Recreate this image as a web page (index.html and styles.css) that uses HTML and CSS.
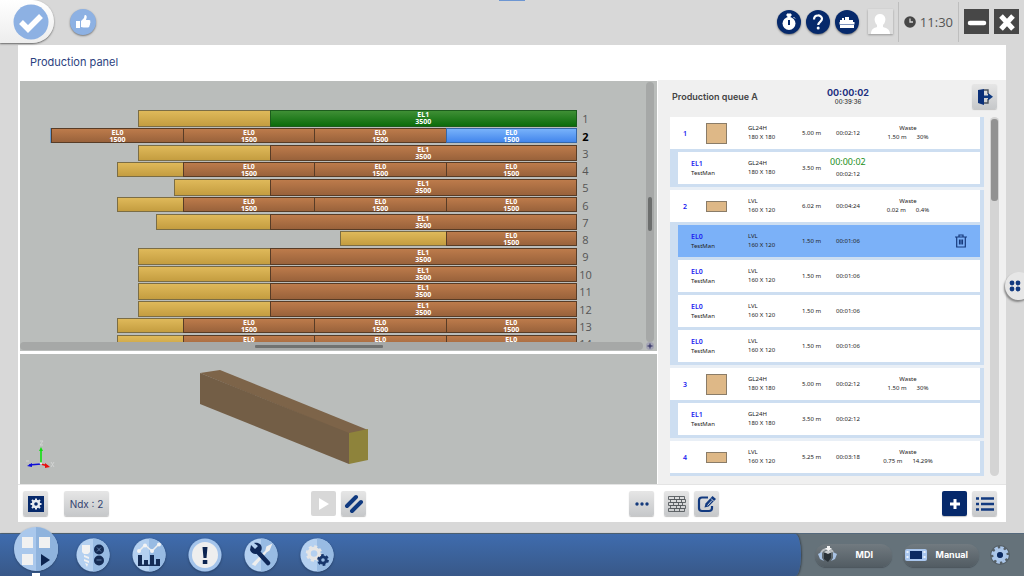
FILE: index.html
```html
<!DOCTYPE html>
<html lang="en">
<head>
<meta charset="utf-8">
<title>Production panel</title>
<link rel="stylesheet" href="styles.css">
</head>
<body>
<header class="topbar">
  <span class="top-mark"></span>
  <button class="tab-check" aria-label="Confirm"><svg viewBox="0 0 36 36" width="36" height="36"><circle cx="18" cy="18" r="17.500" fill="#8db1e3"/><path d="M8 18l7 7L28 12" fill="none" stroke="#fff" stroke-width="5.500"/></svg></button>
  <button class="round like" aria-label="Like"><svg viewBox="0 0 26 26" width="26" height="26"><path d="M6 12h4v7H6zM11 12l3-3 .5-2.500c1-1 2.500 0 2.200 2L16 11h3.200c1 0 1.500 1 1 1.700.4.700.2 1.400-.2 1.800.2.800 0 1.400-.4 1.800 0 1-.5 2-1.600 2.200h-4.500L11 18z" fill="#fff"/></svg></button>
  <div class="top-right">
    <button class="round navy" aria-label="Timer"><svg viewBox="0 0 24 24" width="24" height="24"><circle cx="12" cy="13.500" r="6.500" fill="#fff"/><path d="M10 4h4v2h-1v2h-2V6h-1zM16.500 7l1.500 1.500" fill="#fff" stroke="#fff"/><path d="M12 10v5" stroke="#06296b" stroke-width="2"/></svg></button>
    <button class="round navy" aria-label="Help"><svg viewBox="0 0 24 24" width="24" height="24"><path d="M8 9.500c0-5.500 8-5 8-.7 0 3-3.800 3-3.800 6.200" fill="none" stroke="#fff" stroke-width="2.200"/><circle cx="12.200" cy="18" r="1.500" fill="#fff"/></svg></button>
    <button class="round navy" aria-label="Machine"><svg viewBox="0 0 24 24" width="24" height="24"><path d="M5 10h2V8h2v2h1V7h4v3h4v2h1.500v2H4.500v-2H5zM5 15h14v3H5z" fill="#fff"/><path d="M4.500 14.500h15" stroke="#9fb2d4" stroke-width=".8"/></svg></button>
    <button class="user" aria-label="User"><svg viewBox="0 0 24 24" width="24" height="24"><path d="M3 24c0-5 3-6 6-7v-2c-4-4-3-11 3-11s7 7 3 11v2c3 1 7 2 7 7z" fill="#fff"/></svg></button>
    <div class="clock"><svg viewBox="0 0 12 12" width="12" height="12"><circle cx="6" cy="6" r="5.800" fill="#474747"/><path d="M6 2.500V6h3" fill="none" stroke="#d8d8d8" stroke-width="1.300"/></svg><span>11:30</span></div>
    <button class="win" aria-label="Minimize"><svg viewBox="0 0 24 24" width="24" height="24"><path d="M5 13h14" stroke="#fff" stroke-width="4.500" stroke-linecap="round"/></svg></button>
    <button class="win" aria-label="Close"><svg viewBox="0 0 24 24" width="24" height="24"><path d="M6 6l12 13M18 6L6 19" stroke="#fff" stroke-width="5"/></svg></button>
  </div>
</header>

<main class="panel">
  <h1 class="title">Production panel</h1>
  <div class="columns">
    <section class="left">
      <div class="chart">
        <div class="chart-view">
          <div class="rows">
            <div class="row tall"><div class="bars"><i class="waste" style="width:23.600%"></i><b class="seg l3500 green">EL1<br>3500</b></div><span>1</span></div>
            <div class="row current"><div class="bars"><i class="cut"></i><b class="seg l1500">EL0<br>1500</b><b class="seg l1500">EL0<br>1500</b><b class="seg l1500">EL0<br>1500</b><b class="seg l1500 blue">EL0<br>1500</b></div><span>2</span></div>
            <div class="row tall"><div class="bars"><i class="waste" style="width:23.600%"></i><b class="seg l3500">EL1<br>3500</b></div><span>3</span></div>
            <div class="row"><div class="bars"><i class="waste" style="width:11.800%"></i><b class="seg l1500">EL0<br>1500</b><b class="seg l1500">EL0<br>1500</b><b class="seg l1500">EL0<br>1500</b></div><span>4</span></div>
            <div class="row tall"><div class="bars"><i class="waste" style="width:17.200%"></i><b class="seg l3500">EL1<br>3500</b></div><span>5</span></div>
            <div class="row"><div class="bars"><i class="waste" style="width:11.800%"></i><b class="seg l1500">EL0<br>1500</b><b class="seg l1500">EL0<br>1500</b><b class="seg l1500">EL0<br>1500</b></div><span>6</span></div>
            <div class="row tall"><div class="bars"><i class="waste" style="width:20.400%"></i><b class="seg l3500">EL1<br>3500</b></div><span>7</span></div>
            <div class="row"><div class="bars"><i class="waste" style="width:18.900%"></i><b class="seg l1500">EL0<br>1500</b></div><span>8</span></div>
            <div class="row tall"><div class="bars"><i class="waste" style="width:23.600%"></i><b class="seg l3500">EL1<br>3500</b></div><span>9</span></div>
            <div class="row tall"><div class="bars"><i class="waste" style="width:23.600%"></i><b class="seg l3500">EL1<br>3500</b></div><span>10</span></div>
            <div class="row tall"><div class="bars"><i class="waste" style="width:23.600%"></i><b class="seg l3500">EL1<br>3500</b></div><span>11</span></div>
            <div class="row tall"><div class="bars"><i class="waste" style="width:23.600%"></i><b class="seg l3500">EL1<br>3500</b></div><span>12</span></div>
            <div class="row"><div class="bars"><i class="waste" style="width:11.800%"></i><b class="seg l1500">EL0<br>1500</b><b class="seg l1500">EL0<br>1500</b><b class="seg l1500">EL0<br>1500</b></div><span>13</span></div>
            <div class="row"><div class="bars"><i class="waste" style="width:11.800%"></i><b class="seg l1500">EL0<br>1500</b><b class="seg l1500">EL0<br>1500</b><b class="seg l1500">EL0<br>1500</b></div><span>14</span></div>
          </div>
        </div>
        <div class="vtrack"><i></i></div>
        <div class="htrack"><i></i></div>
        <button class="zoom-in" aria-label="Zoom in"><svg viewBox="0 0 8 8" width="8" height="8"><circle cx="4" cy="4" r="4" fill="#a4a4b4"/><path d="M4 1.500v5M1.500 4h5" stroke="#24245c"/></svg></button>
      </div>
      <div class="model">
        <svg class="beam" viewBox="0 0 170 96" width="170" height="96"><path d="M0 4L20 1 168 61 149 65z" fill="#7d6449"/><path d="M0 4L149 64V95L0 35z" fill="#735e46"/><path d="M149 64l19-4v31l-19 4z" fill="#8e833b"/></svg>
        <svg class="axes" viewBox="0 0 32 30" width="32" height="30"><g stroke-width="1.600"><path d="M15 23V10" stroke="#10e010"/><path d="M15 24l7 2" stroke="#e81010"/><path d="M15 24L3 25" stroke="#1010d8"/></g><path d="M13 11l2-4 2 4z" fill="#10e010"/><path d="M19 23l5 4-5 1z" fill="#e81010"/><path d="M6 23l-5 3 5 1z" fill="#1010d8"/><circle cx="15" cy="23.500" r="1.200" fill="#eee"/><g fill="none" stroke="#d2d4d3"><path d="M14 1h3l-3 4h3M0 21h3M25 22l3 5m0-5l-3 5"/></g></svg>
      </div>
      <div class="tools left-tools">
        <div class="group spaced">
          <button class="tool" aria-label="Settings"><svg viewBox="0 0 16 16" width="16" height="16"><path d="M0 0h16v16H0z" fill="#06296b"/><circle cx="8" cy="8" r="3" fill="none" stroke="#e8ecf2" stroke-width="2.400"/><path d="M8 2.500v2M8 11.500v2M2.500 8h2M11.500 8h2M4 4l1.500 1.500M10.500 10.500L12 12M12 4l-1.500 1.500M4 12l1.500-1.500" stroke="#e8ecf2" stroke-width="2"/></svg></button>
          <button class="tool ndx">Ndx : 2</button>
        </div>
        <div class="group">
          <button class="tool off" aria-label="Play" disabled><svg viewBox="0 0 12 14" width="12" height="14"><path d="M1 1l10 6-10 6z" fill="#fff"/></svg></button>
          <button class="tool" aria-label="Stripes"><svg viewBox="0 0 20 20" width="20" height="20"><path d="M3 12L12 3M8 17L17 8" stroke="#103a80" stroke-width="4" stroke-linecap="round"/></svg></button>
        </div>
        <div class="group end">
          <button class="tool" aria-label="More"><svg viewBox="0 0 14 4" width="14" height="4"><g fill="#143a7c"><circle cx="2" cy="2" r="1.700"/><circle cx="7" cy="2" r="1.700"/><circle cx="12" cy="2" r="1.700"/></g></svg></button>
        </div>
      </div>
    </section>

    <section class="right">
      <div class="queue">
        <div class="queue-head">
          <h2>Production queue A</h2>
          <div class="totals"><strong>00:00:02</strong><span>00:39:36</span></div>
          <button class="tool exit" aria-label="Exit"><svg viewBox="0 0 16 18" width="16" height="18"><path d="M1 2l6-1v16l-6-2z" fill="#0a2f78"/><path d="M7 2h4v4M7 15h4v-4" fill="none" stroke="#4a525c" stroke-width="1.400"/><path d="M7 7.500h4V5l5 3.700L11 12.500V10H7z" fill="#103a80"/></svg></button>
        </div>
        <div class="queue-body">
          <div class="list">
            <article class="job">
              <div class="item head"><b>1</b><i class="swatch"></i><p>GL24H<br>180 X 180</p><span>5.00 m</span><span>00:02:12</span><p class="loss">Waste<br>1.50 m<em>30%</em></p></div>
              <div class="item part"><p><b>EL1</b><br>TestMan</p><p>GL24H<br>180 X 180</p><span>3.50 m</span><span class="run"><strong>00:00:02</strong>00:02:12</span></div>
            </article>
            <article class="job">
              <div class="item head"><b>2</b><i class="swatch flat"></i><p>LVL<br>160 X 120</p><span>6.02 m</span><span>00:04:24</span><p class="loss">Waste<br>0.02 m<em>0.4%</em></p></div>
              <div class="item part selected"><p><b>EL0</b><br>TestMan</p><p>LVL<br>160 X 120</p><span>1.50 m</span><span>00:01:06</span><button class="trash" aria-label="Delete"><svg viewBox="0 0 12 14" width="12" height="14"><path d="M0 3h12M4 3V1h4v2M1.700 3.500V13h8.600V3.500M4.500 5.500v5M6 5.500v5M7.500 5.500v5" fill="none" stroke="#173a7c" stroke-width="1.200"/></svg></button></div>
              <div class="item part"><p><b>EL0</b><br>TestMan</p><p>LVL<br>160 X 120</p><span>1.50 m</span><span>00:01:06</span></div>
              <div class="item part"><p><b>EL0</b><br>TestMan</p><p>LVL<br>160 X 120</p><span>1.50 m</span><span>00:01:06</span></div>
              <div class="item part"><p><b>EL0</b><br>TestMan</p><p>LVL<br>160 X 120</p><span>1.50 m</span><span>00:01:06</span></div>
            </article>
            <article class="job">
              <div class="item head"><b>3</b><i class="swatch"></i><p>GL24H<br>180 X 180</p><span>5.00 m</span><span>00:02:12</span><p class="loss">Waste<br>1.50 m<em>30%</em></p></div>
              <div class="item part"><p><b>EL1</b><br>TestMan</p><p>GL24H<br>180 X 180</p><span>3.50 m</span><span>00:02:12</span></div>
            </article>
            <article class="job">
              <div class="item head"><b>4</b><i class="swatch flat"></i><p>LVL<br>160 X 120</p><span>5.25 m</span><span>00:03:18</span><p class="loss">Waste<br>0.75 m<em>14.29%</em></p></div>
              <div class="item part"></div>
            </article>
          </div>
          <div class="list-track"><i></i></div>
        </div>
      </div>
      <div class="tools right-tools">
        <div class="group">
          <button class="tool" aria-label="Bricks"><svg viewBox="0 0 18 18" width="18" height="18"><path d="M.5 1.500h16v3H.5zM2.500 4.500h15v3h-15zM.5 7.500h14v3H.5zM2.500 10.500h15v3h-15zM.5 13.500h16v3H.5zM6.500 1.500v3M11.500 1.500v3M8.500 4.500v3M13.500 4.500v3M5.500 7.500v3M10.500 7.500v3M8.500 10.500v3M12.500 10.500v3M6.500 13.500v3M11.500 13.500v3" fill="none" stroke="#555a5e" stroke-width=".9"/></svg></button>
          <button class="tool" aria-label="Edit"><svg viewBox="0 0 20 20" width="20" height="20"><path d="M11 3.500H5Q2 3.500 2 6.500V14q0 3 3 3h7q3 0 3-3v-2" fill="none" stroke="#123a80" stroke-width="2.200"/><path d="M7.500 13.500l1-4 7-7.500 3.500 3-7.500 7.500z" fill="#123a80"/><path d="M14 4.500l3 3M10.500 11.500l4.500-5" stroke="#d8dce2"/></svg></button>
        </div>
        <div class="group">
          <button class="tool add" aria-label="Add"><svg viewBox="0 0 12 12" width="12" height="12"><path d="M6 1v10M1 6h10" stroke="#fff" stroke-width="3"/></svg></button>
          <button class="tool" aria-label="List"><svg viewBox="0 0 18 16" width="18" height="16"><path d="M5 2.500h13M5 8h13M5 13.500h13M0 2.500h3M0 8h3M0 13.500h3" stroke="#123a80" stroke-width="2.600"/></svg></button>
        </div>
      </div>
    </section>
  </div>
</main>

<button class="side-tab" aria-label="Open side panel"><svg viewBox="0 0 12 12" width="12" height="12"><g fill="#123a80"><circle cx="3" cy="3" r="2.400"/><circle cx="9" cy="3" r="2.400"/><circle cx="3" cy="9" r="2.400"/><circle cx="9" cy="9" r="2.400"/></g></svg></button>

<footer class="dock">
  <nav class="apps">
    <button class="app active" aria-label="Production"><svg viewBox="0 0 44 44" width="44" height="44"><circle cx="22" cy="22" r="22" fill="#aac8ec"/><path d="M22 0a22 22 0 0 1 0 44z" fill="#8fb3dd"/><path d="M8 10h11v11H8zM25 10h11v11H25zM8 27h11v11H8z" fill="#f1f1f1"/><path d="M27 27l9 6-9 6z" fill="#0c2450"/></svg></button>
    <button class="app" aria-label="Tools"><svg viewBox="0 0 34 34" width="34" height="34"><circle cx="17" cy="17" r="16.500" fill="#b4d0f0"/><path d="M17 .5a16.500 16.500 0 0 1 0 33z" fill="#98bbe3"/><path d="M6 7h8v7l-2 2H8l-2-2zM8 17l5 2v2l-5-2zM8 21l5 2v2l-5-2zM9 25l3 1-1 3z" fill="#f2f2f2"/><circle cx="23" cy="11.500" r="5" fill="#152c55"/><circle cx="23" cy="22.500" r="5" fill="#152c55"/><path d="M21 9.500l4 4M25 9.500l-4 4M20.500 22h5" stroke="#6c8ab4" stroke-width=".9"/></svg></button>
    <button class="app" aria-label="Statistics"><svg viewBox="0 0 34 34" width="34" height="34"><circle cx="17" cy="17" r="16.500" fill="#b4d0f0"/><path d="M17 .5a16.500 16.500 0 0 1 0 33z" fill="#98bbe3"/><path d="M7 13l6-6 7 6 7-7" fill="none" stroke="#eee" stroke-width="1.500"/><g fill="#f4f4f4"><circle cx="7" cy="13" r="2"/><circle cx="13" cy="7.500" r="2"/><circle cx="20" cy="13" r="2"/><circle cx="27" cy="6.500" r="2"/></g><path d="M6 17h4v11H6zM12 22h4v6h-4zM18 17h4v11h-4zM24 21h4v7h-4zM6 26.500h22V28H6z" fill="#152c55"/></svg></button>
    <button class="app" aria-label="Alarms"><svg viewBox="0 0 34 34" width="34" height="34"><circle cx="17" cy="17" r="16.500" fill="#a4c4eb"/><circle cx="17" cy="17" r="13" fill="#eee"/><path d="M14.500 9h5l-1 11h-3zM14.800 22h4.500v4h-4.500z" fill="#0c2450"/></svg></button>
    <button class="app" aria-label="Maintenance"><svg viewBox="0 0 34 34" width="34" height="34"><circle cx="17" cy="17" r="16.500" fill="#b4d0f0"/><path d="M17 .5a16.500 16.500 0 0 1 0 33z" fill="#98bbe3"/><path d="M9 26L22 13l1-4 4-2-2 5-3 2L11 27z" fill="#eee" stroke="#eee" stroke-width="1.500"/><path d="M13 13l11 12" stroke="#0f2858" stroke-width="4.500" stroke-linecap="round"/><path d="M7 7l4 4 3-3-4-3c7-1 9 4 7 8-3 4-9 4-11-1z" fill="#0f2858"/></svg></button>
    <button class="app" aria-label="Configuration"><svg viewBox="0 0 34 34" width="34" height="34"><circle cx="17" cy="17" r="16.500" fill="#b4d0f0"/><path d="M17 .5a16.500 16.500 0 0 1 0 33z" fill="#98bbe3"/><circle cx="14" cy="15.500" r="5" fill="none" stroke="#e6e6e6" stroke-width="3.500"/><circle cx="14" cy="15.500" r="7" fill="none" stroke="#e6e6e6" stroke-width="2.500" stroke-dasharray="3 2.500"/><circle cx="23" cy="22" r="3.200" fill="none" stroke="#17366c" stroke-width="2.800"/><circle cx="23" cy="22" r="4.900" fill="none" stroke="#17366c" stroke-width="2" stroke-dasharray="2.700 2.430"/></svg></button>
  </nav>
  <div class="modes">
    <button class="pill"><svg viewBox="0 0 22 18" width="22" height="18"><path d="M4 7a7 7 0 0 1 12-1" fill="none" stroke="#b9bec2" stroke-width="2"/><path d="M7 7h7v5l-3 4-4-3z" fill="#2a3238"/><path d="M7 6l4-2 4 2-4 2z" fill="#c9cdd0"/><path d="M1 8l4-2v6l2 3-4-2zM20 8l-4-2v6l-2 3 4-2z" fill="#a9c3e4"/><path d="M10 0h3v2h2l-3.500 3L8 2h2z" fill="#f4f4f4"/></svg><span>MDI</span></button>
    <button class="pill"><svg viewBox="0 0 22 14" width="22" height="14"><rect y="1" width="22" height="12" rx="2" fill="#a9c6ee"/><path d="M5 3h12v8H5z" fill="#0b2a62"/><path d="M2.500 3v2M2.500 8v2M19.500 3v2M19.500 8v2" stroke="#e8f0fa" stroke-width="2"/></svg><span>Manual</span></button>
    <button class="gear" aria-label="Options"><svg viewBox="0 0 20 20" width="20" height="20"><circle cx="10" cy="10" r="4.800" fill="none" stroke="#abc7ea" stroke-width="4"/><circle cx="10" cy="10" r="7.500" fill="none" stroke="#abc7ea" stroke-width="2.500" stroke-dasharray="3.500 2.390"/><circle cx="10" cy="10" r="3" fill="#0b2a62"/></svg></button>
  </div>
</footer>
</body>
</html>
```
FILE: styles.css
```css
* { box-sizing: border-box; }
body {
  margin: 0;
  height: 100vh;
  display: flex;
  flex-direction: column;
  position: relative;
  overflow: hidden;
  background: #d8d8d8;
  font-family: "Noto Sans", "Open Sans", sans-serif;
  color: #222;
}
h1, h2, p { margin: 0; font-weight: 400; }
button { padding: 0; border: 0; font: inherit; color: inherit; display: flex; align-items: center; justify-content: center; background: none; }
svg { display: block; flex: none; }
i, em { font-style: normal; }

.topbar { position: relative; display: flex; align-items: center; height: 45px; flex: none; padding-bottom: 2px; }
.top-mark { position: absolute; top: 0; left: 50%; width: 26px; height: 1px; margin-left: -13px; background: #6d96d2; }
.tab-check { width: 54px; height: 43px; justify-content: flex-end; padding-right: 5px; border-radius: 0 22px 22px 0; background: linear-gradient(#fff, #ededed); box-shadow: 0 1px 2px #666; }
.round { border-radius: 50%; box-shadow: 0 1px 2px #777; }
.like { margin-left: 16px; background: #8db1e3; }
.navy { background: #06296b; }
.top-right { display: flex; align-items: center; gap: 5px; margin-left: auto; padding-right: 5px; }
.user { width: 25px; height: 25px; margin-left: 4px; background: #dedede; box-shadow: 0 1px 2px #999; }
.clock { display: flex; align-items: center; gap: 4px; height: 40px; padding: 0 5px; border: solid #bebebe; border-width: 0 1px; font-family: "Open Sans", sans-serif; font-size: 13px; color: #555; }
.win { width: 25px; height: 25px; background: #474747; }

.panel { flex: 1; min-height: 0; display: flex; flex-direction: column; margin: 0 18px 11px; background: #fff; }
.title { flex: none; height: 35px; padding-left: 12px; font: 11px/34px "Inter", sans-serif; color: #2c3f80; }
.columns { flex: 1; min-height: 0; display: grid; grid-template-columns: minmax(0, 1fr) 349px; }
.left, .right { display: flex; flex-direction: column; min-height: 0; min-width: 0; }

.chart { flex: 27; min-height: 0; display: grid; grid-template: minmax(0, 1fr) 9px / minmax(0, 1fr) 11px; margin: 1px 0 0 2px; background: #babdbb; }
.chart-view { overflow: hidden; padding: 29px 52px 0 0; }
.rows { display: flex; flex-direction: column; height: 242px; }
.row { flex: 10 0 0; min-height: 0; display: flex; padding-bottom: 2px; }
.row.tall { flex-grow: 11; padding-bottom: 1px; }
.bars { flex: 1; display: flex; justify-content: flex-end; min-width: 0; }
.row > span { width: 17px; font: 11px/17px "Open Sans", sans-serif; text-align: center; color: #555; }
.row.current > span { font-weight: 700; color: #000; }
.waste, .seg { border: 1px solid #7b6d45; border-right-width: 0; }
.waste { background: linear-gradient(#dfb95a, #c49d40); }
.seg { overflow: hidden; border-color: #583c26; background: linear-gradient(#bd7b4b, #99623b); font: 700 7px/7px "Noto Sans", sans-serif; text-align: center; color: #fff; }
.seg:last-child { border-right-width: 1px; }
.l1500 { width: 23.6%; }
.l3500 { width: 55.2%; }
.green { border-color: #1c5c1c; background: linear-gradient(#3f8f35, #0b6c0b); }
.blue { border-color: #3567a8; background: linear-gradient(#78b2fa, #4386ec); }
.cut { width: 1px; background: #6a9cd0; }
.vtrack { width: 8px; margin: 1px 0 0; padding: 115px 2px 0; border-radius: 4px; background: #a6a8a7; }
.vtrack i { display: block; height: 34px; border-radius: 2px; background: #6c6e6d; }
.htrack { height: 8px; margin-right: 3px; padding: 3px 0 0 235px; border-radius: 4px; background: #a6a8a7; }
.htrack i { display: block; width: 128px; height: 3px; border-radius: 1px; background: #707271; }
.zoom-in { width: 8px; height: 8px; }

.model { flex: 13; min-height: 0; position: relative; margin: 3px 0 0 2px; background: #babdbb; }
.beam { position: absolute; left: 180px; top: 15px; }
.axes { position: absolute; left: 6px; bottom: 14px; }

.tools { flex: none; height: 38px; border-top: 1px solid #e4e4e4; align-items: center; background: #fff; }
.left-tools { display: grid; grid-template-columns: 1fr auto 1fr; padding: 0 3px 0 5px; }
.right-tools { display: flex; justify-content: space-between; padding: 0 9px 0 7px; }
.group { display: flex; gap: 5px; }
.spaced { gap: 16px; }
.end { justify-content: flex-end; }
.tool { width: 25px; height: 25px; border-radius: 2px; background: linear-gradient(#e6e6e6, #c6c8ca); box-shadow: 0 1px 1px #c4c4c4; }
.ndx { width: 45px; font: 10px/24px "Inter", sans-serif; color: #33436f; }
.off { background: #d8d8d8; box-shadow: none; }
.add { background: #06296b; }

.queue { flex: 1; min-height: 0; display: flex; flex-direction: column; margin-left: 1px; background: #f0f0f0; }
.queue-head { flex: none; display: grid; grid-template-columns: 146px 60px 1fr; align-items: center; height: 37px; padding: 0 9px 4px 14px; font-family: "Inter", sans-serif; }
.queue-head h2 { font-size: 9px; font-weight: 600; white-space: nowrap; color: #444; }
.totals { display: flex; flex-direction: column; align-items: center; }
.totals strong { font-size: 9px; line-height: 11px; color: #1d3180; }
.totals span { font-size: 6px; font-weight: 500; line-height: 8px; color: #333; }
.exit { justify-self: end; }
.queue-body { flex: 1; min-height: 0; display: flex; padding: 0 7px 8px 12px; }
.list { flex: 1; overflow: hidden; background: #e9eff6; }
.job { display: flex; flex-direction: column; gap: 3px; margin-bottom: 3px; padding: 0 4px 3px 0; background: #cddef1; }
.item { display: grid; align-items: center; height: 32px; padding-left: 13px; font-size: 6px; line-height: 9px; white-space: nowrap; background: #fff; }
.head { grid-template-columns: 23px 42px 54px 34px 44px 56px 1fr; }
.part { grid-template-columns: 57px 54px 34px 44px 1fr; margin-left: 8px; }
.item b { font-size: 7px; font-weight: 600; color: #1c1cf0; }
.selected { background: #7bb1f8; }
.swatch { width: 21px; height: 21px; border: 1px solid #8a7c68; background: #deb887; }
.flat { height: 11px; }
.loss { text-align: center; }
.loss em { margin-left: 10px; }
.run { display: flex; flex-direction: column; gap: 3px; }
.run strong { margin-left: -6px; font-size: 9px; font-weight: 400; line-height: 10px; color: #1d8f1d; }
.trash { justify-self: end; margin-right: 13px; }
.list-track { width: 9px; margin-left: 6px; padding: 2px 1px 0; border-radius: 5px; background: #d4d4d4; }
.list-track i { display: block; height: 82px; border-radius: 3px; background: #929292; }

.side-tab { position: absolute; right: -9px; top: 50%; width: 28px; height: 28px; margin-top: -16px; padding-right: 8px; border-radius: 50%; background: #e6e6e6; box-shadow: -1px 2px 2px #888; }

.dock { flex: none; display: flex; height: 43px; background: #65727a; border-top: 1px solid #55697c; }
.apps { flex: 1; display: flex; align-items: center; gap: 22px; padding-left: 14px; border-radius: 0 6px 6px 0 / 0 20px 20px 0; background: linear-gradient(#3f6cae, #385888); box-shadow: 1px 0 2px #37444f; }
.app { flex: none; border-radius: 50%; box-shadow: 0 1px 2px #2c466c; }
.active { position: relative; margin-top: -12px; margin-right: -4px; }
.active::after { content: ""; position: absolute; left: 18px; bottom: -5px; width: 8px; height: 3px; background: #fff; }
.modes { flex: none; display: flex; align-items: center; gap: 11px; width: 223px; padding: 0 14px; }
.pill { flex: 1; height: 23px; gap: 6px; justify-content: flex-start; padding-left: 2px; border-radius: 12px; background: linear-gradient(#717a80, #525c63); box-shadow: 0 1px 1px #4c565d; font: 700 9px/20px "Inter", sans-serif; color: #fff; }
.pill span { flex: 1; padding-right: 8px; text-align: center; }
.gear { width: 20px; height: 20px; border-radius: 50%; background: #566067; }
```
